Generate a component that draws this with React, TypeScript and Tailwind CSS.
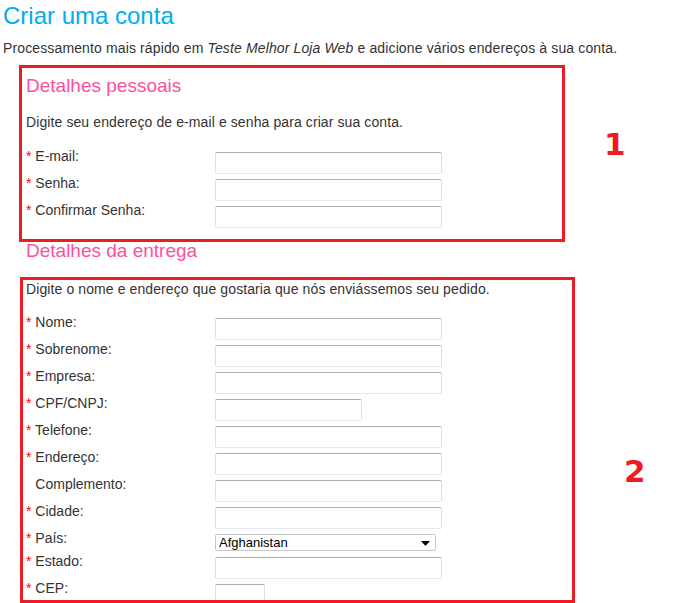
import React from 'react';

interface FieldProps {
  label: string;
  required?: boolean;
  width?: string;
}

const inputClass =
  'mt-[4px] h-[22px] rounded-[2px] border border-[#dbdfe6] border-t-[#abadb3] border-b-[#e3e9ef] bg-white';

const FieldLabel: React.FC<{ label: string; required?: boolean }> = ({ label, required = true }) => (
  <div className="w-[189px] shrink-0 text-[14px] leading-[16px] text-[#333]">
    <span className={required ? 'text-[#f00]' : 'invisible'}>*</span> {label}
  </div>
);

const TextField: React.FC<FieldProps> = ({ label, required = true, width = 'w-[227px]' }) => (
  <div className="flex h-[27px] items-start">
    <FieldLabel label={label} required={required} />
    <div className={`${inputClass} ${width}`} />
  </div>
);

const CountryField: React.FC = () => (
  <div className="flex h-[23px] items-start">
    <FieldLabel label="País:" />
    <div className="mt-[4px] flex h-[17px] w-[221px] items-center justify-between rounded-[2px] border border-[#c8c8c8] bg-white pl-[3px] pr-[5px]">
      <span className="text-[13px] leading-[15px] text-black">Afghanistan</span>
      <svg width="9" height="5" viewBox="0 0 9 5" className="mt-[1px]">
        <path d="M0 0 L9 0 L4.5 5 Z" fill="#000" />
      </svg>
    </div>
  </div>
);

export default function App() {
  return (
    <div className="relative h-[603px] w-[684px] overflow-hidden bg-white font-['Liberation_Sans',Arial,sans-serif] text-[#333]">
      <div className="pl-[3px]">
        <h1 className="pt-[2px] text-[24px] leading-[27px] text-[#00adef]">Criar uma conta</h1>
        <p className="mt-[11px] text-[14px] leading-[16px] tracking-[0.13px]">
          Processamento mais rápido em <i>Teste Melhor Loja Web</i> e adicione vários endereços à sua conta.
        </p>
      </div>

      <div className="pl-[26px]">
        {/* Detalhes pessoais */}
        <h2 className="mt-[19px] text-[19px] leading-[22px] text-[#fd4f9f]">Detalhes pessoais</h2>
        <p className="mt-[17px] text-[14px] leading-[16px] tracking-[0.1px]">
          Digite seu endereço de e-mail e senha para criar sua conta.
        </p>
        <div className="mt-[18px]">
          <TextField label="E-mail:" />
          <TextField label="Senha:" />
          <TextField label="Confirmar Senha:" />
        </div>

        {/* Detalhes da entrega */}
        <h2 className="mt-[11px] text-[19px] leading-[22px] text-[#fd4f9f]">Detalhes da entrega</h2>
        <p className="mt-[19px] text-[14px] leading-[16px] tracking-[0.1px]">
          Digite o nome e endereço que gostaria que nós enviássemos seu pedido.
        </p>
        <div className="mt-[17px]">
          <TextField label="Nome:" />
          <TextField label="Sobrenome:" />
          <TextField label="Empresa:" />
          <TextField label="CPF/CNPJ:" width="w-[147px]" />
          <TextField label="Telefone:" />
          <TextField label="Endereço:" />
          <TextField label="Complemento:" required={false} />
          <TextField label="Cidade:" />
          <CountryField />
          <TextField label="Estado:" />
          <TextField label="CEP:" width="w-[50px]" />
        </div>
      </div>

      {/* annotations */}
      <div className="absolute left-[19px] top-[65px] h-[177px] w-[546px] border-[3px] border-[#ed1c24]" />
      <div className="absolute left-[20px] top-[277px] h-[326px] w-[555px] border-[3px] border-[#ed1c24]" />
      <div className="absolute left-[604px] top-[129px] font-['DejaVu_Sans',sans-serif] text-[31px] font-bold leading-[31px] text-[#ed1c24]">
        1
      </div>
      <div className="absolute left-[624px] top-[456px] font-['DejaVu_Sans',sans-serif] text-[31px] font-bold leading-[31px] text-[#ed1c24]">
        2
      </div>
    </div>
  );
}
